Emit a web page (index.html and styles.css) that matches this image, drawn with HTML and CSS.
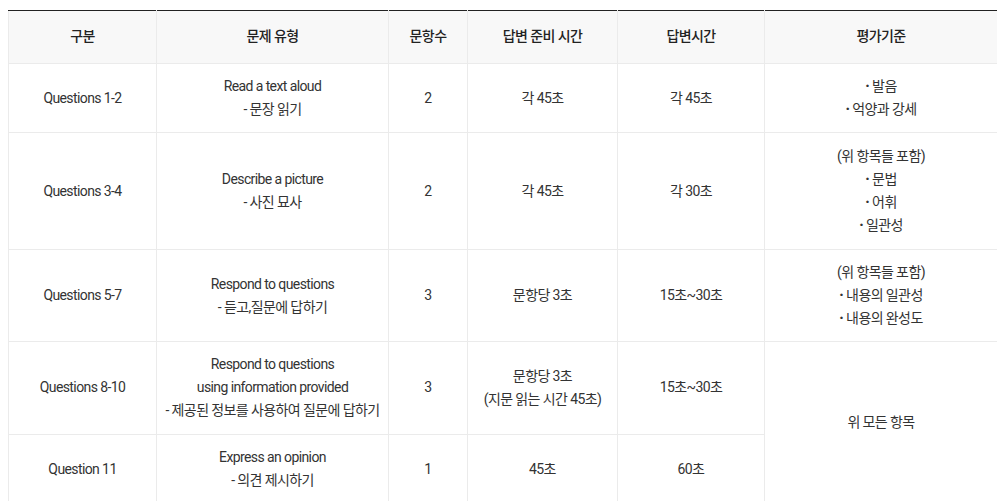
FILE: index.html
```html
<!DOCTYPE html>
<html lang="ko">
<head>
<meta charset="utf-8">
<link rel="stylesheet" href="styles.css">
</head>
<body>
<table class="spec">
  <colgroup>
    <col class="c1"><col class="c2"><col class="c3"><col class="c4"><col class="c5"><col class="c6">
  </colgroup>
  <thead>
    <tr>
      <th>구분</th><th>문제 유형</th><th>문항수</th><th>답변 준비 시간</th><th>답변시간</th><th>평가기준</th>
    </tr>
  </thead>
  <tbody>
    <tr>
      <td>Questions 1-2</td>
      <td>Read a text aloud<br>- 문장 읽기</td>
      <td>2</td>
      <td>각 45초</td>
      <td>각 45초</td>
      <td><b class="dot">·</b> 발음<br><b class="dot">·</b> 억양과 강세</td>
    </tr>
    <tr class="pad-both">
      <td>Questions 3-4</td>
      <td>Describe a picture<br>- 사진 묘사</td>
      <td>2</td>
      <td>각 45초</td>
      <td>각 30초</td>
      <td>(위 항목들 포함)<br><b class="dot">·</b> 문법<br><b class="dot">·</b> 어휘<br><b class="dot">·</b> 일관성</td>
    </tr>
    <tr>
      <td>Questions 5-7</td>
      <td>Respond to questions<br>- 듣고,질문에 답하기</td>
      <td>3</td>
      <td>문항당 3초</td>
      <td>15초~30초</td>
      <td>(위 항목들 포함)<br><b class="dot">·</b> 내용의 일관성<br><b class="dot">·</b> 내용의 완성도</td>
    </tr>
    <tr class="pad-bottom">
      <td>Questions 8-10</td>
      <td>Respond to questions<br>using information provided<br>- 제공된 정보를 사용하여 질문에 답하기</td>
      <td>3</td>
      <td>문항당 3초<br>(지문 읽는 시간 45초)</td>
      <td>15초~30초</td>
      <td rowspan="2">위 모든 항목</td>
    </tr>
    <tr>
      <td>Question 11</td>
      <td>Express an opinion<br>- 의견 제시하기</td>
      <td>1</td>
      <td>45초</td>
      <td>60초</td>
    </tr>
  </tbody>
</table>
</body>
</html>
```
FILE: styles.css
```css
html, body {
  background: #ffffff;
}
body {
  margin: 10px 8px 8px;
  font-family: Roboto, "Noto Sans CJK KR", sans-serif;
  font-size: 14px;
  line-height: 23px;
  color: #333333;
}
.spec {
  width: 100%;
  border-collapse: collapse;
  table-layout: fixed;
  border-top: 1px solid #222222;
}
.c1 { width: 148px; }
.c2 { width: 232px; }
.c3 { width: 79px; }
.c4 { width: 150px; }
.c5 { width: 147px; }
.c6 { width: 233px; }
.spec th,
.spec td {
  border: 1px solid #ebebeb;
  text-align: center;
  vertical-align: middle;
  padding: 11px 4px;
  letter-spacing: -0.6px;
  white-space: nowrap;
}
.spec tr:first-child th {
  border-top: 1px solid #222222;
}
.spec th {
  background: #f8f8f8;
  font-weight: 500;
  color: #222222;
  padding: 14px 4px 15px;
}
.spec .pad-both td {
  padding-top: 12px;
  padding-bottom: 12px;
}
.spec .pad-bottom td {
  padding-bottom: 12px;
}
.dot {
  font-weight: 900;
  color: #333333;
}
```
